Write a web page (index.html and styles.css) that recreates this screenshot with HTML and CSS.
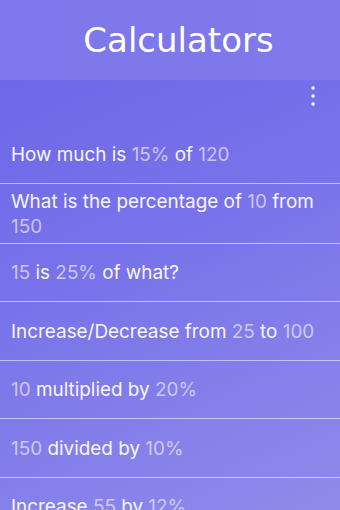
FILE: index.html
```
<!DOCTYPE html>
<html lang="en">
<head>
<meta charset="utf-8">
<title>Calculators</title>
<link rel="stylesheet" href="styles.css">
</head>
<body>
<div class="app">
  <header class="header">
    <h1 class="title">Calculators</h1>
  </header>
  <div class="toolbar">
    <button class="menu" aria-label="More">
      <svg width="6" height="22" viewBox="0 0 6 22"><circle cx="3" cy="3" r="1.7" fill="#fff"/><circle cx="3" cy="11" r="1.7" fill="#fff"/><circle cx="3" cy="19" r="1.7" fill="#fff"/></svg>
    </button>
  </div>
  <ul class="list">
    <li class="row"><span>How much is <em>15%</em> of <em>120</em></span></li>
    <li class="row"><span>What is the percentage of <em>10</em> from <em>150</em></span></li>
    <li class="row"><span><em>15</em> is <em>25%</em> of what?</span></li>
    <li class="row"><span>Increase/Decrease from <em>25</em> to <em>100</em></span></li>
    <li class="row"><span><em>10</em> multiplied by <em>20%</em></span></li>
    <li class="row"><span><em>150</em> divided by <em>10%</em></span></li>
    <li class="row"><span>Increase <em>55</em> by <em>12%</em></span></li>
  </ul>
</div>
</body>
</html>
```
FILE: styles.css
```
html, body {
  margin: 0;
  padding: 0;
  height: 100%;
}
body {
  background: linear-gradient(155deg, #6a63e9 0%, #7a74ea 50%, #8f8bea 100%);
  font-family: Inter, "Noto Sans", sans-serif;
  color: #fff;
  overflow: hidden;
}
.app {
  display: flex;
  flex-direction: column;
  height: 510px;
  overflow: hidden;
}
.header {
  height: 80px;
  flex: none;
  display: flex;
  align-items: center;
  justify-content: center;
  padding-left: 17px;
  background: linear-gradient(90deg, #7d77eb, #8079ec);
}
.title {
  margin: 0;
  font-family: "DejaVu Sans", sans-serif;
  font-weight: normal;
  font-size: 34px;
  line-height: 40px;
  color: #fff;
}
.toolbar {
  height: 45px;
  flex: none;
  display: flex;
  justify-content: flex-end;
  align-items: flex-start;
  padding-right: 24px;
}
.menu {
  margin-top: 5px;
  padding: 0;
  border: 0;
  background: none;
  width: 6px;
  height: 22px;
  display: flex;
}
.list {
  list-style: none;
  margin: 0;
  padding: 0;
}
.row {
  box-sizing: border-box;
  min-height: 58.5px;
  display: flex;
  align-items: center;
  padding: 5px 12px 4px 11px;
  border-bottom: 1px solid rgba(255, 255, 255, 0.55);
  font-size: 18.9px;
  line-height: 25px;
  color: #f7f6ff;
}
.row em {
  font-style: normal;
  color: rgba(225, 222, 245, 0.8);
}
```
